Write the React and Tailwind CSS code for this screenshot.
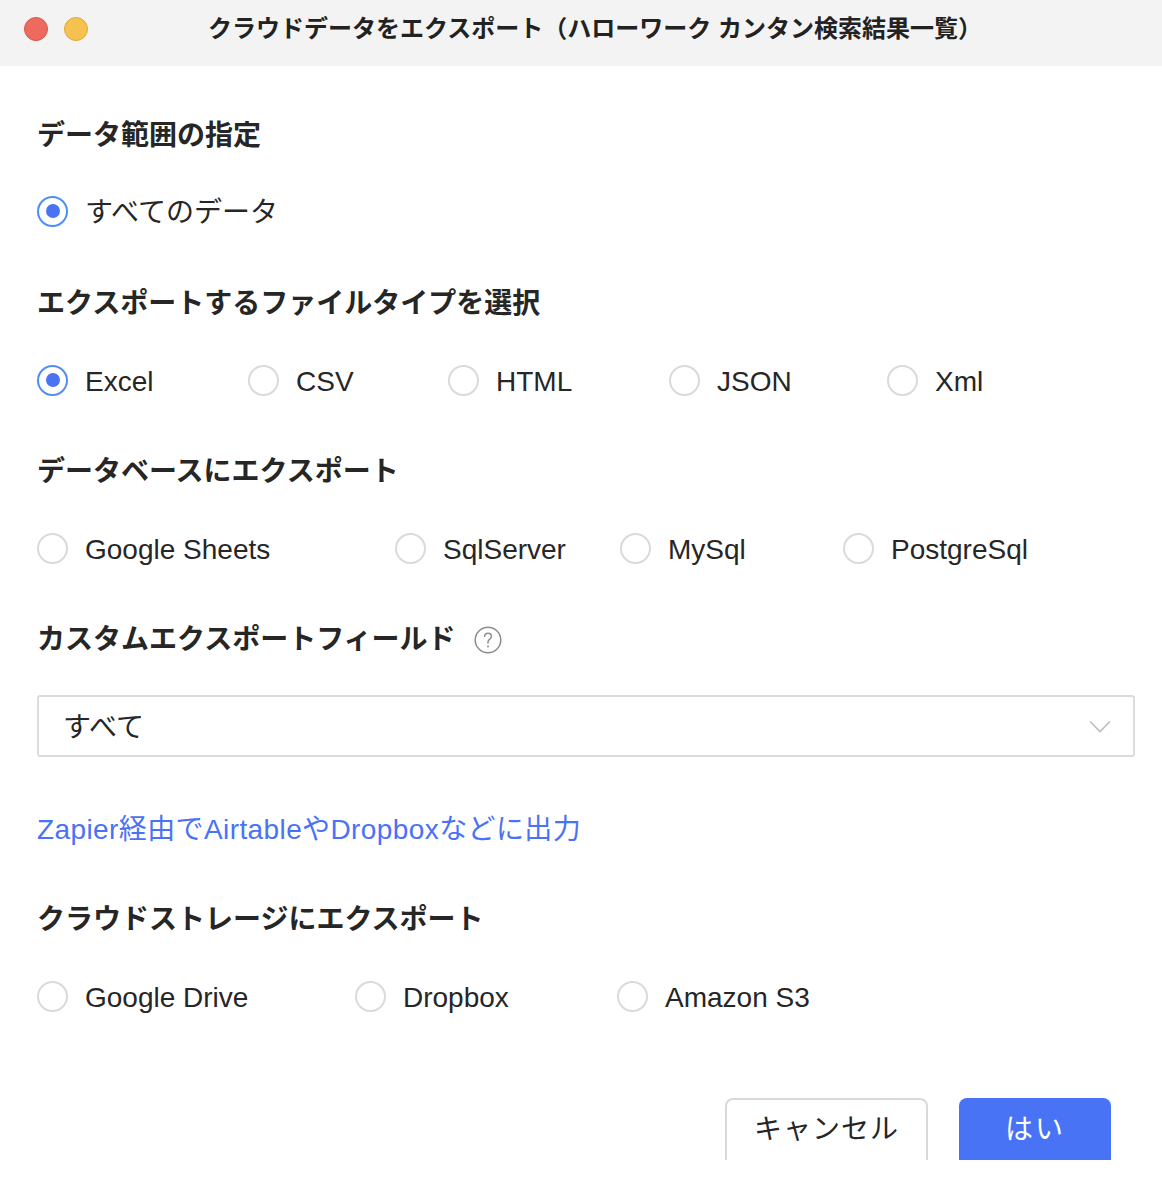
import React from "react";

const FONT = { fontFamily: '"Liberation Sans", "Noto Sans CJK JP", sans-serif' };

function Radio({ checked, label, width }) {
  return (
    <div className="flex items-center h-[40px] shrink-0" style={width ? { width } : undefined}>
      {checked ? (
        <span className="w-[31px] h-[31px] rounded-full border-2 border-[#4d8ef7] flex items-center justify-center shrink-0">
          <span className="w-[14px] h-[14px] rounded-full bg-[#4a72f5]" />
        </span>
      ) : (
        <span className="w-[31px] h-[31px] rounded-full border-2 border-[#dadada] shrink-0" />
      )}
      <span className="ml-[17px] text-[28px] leading-none text-[#262626] whitespace-nowrap pt-[3px]">{label}</span>
    </div>
  );
}

function Heading({ children }) {
  return (
    <div className="h-[40px] flex items-center text-[28px] font-bold leading-none text-[#262626] whitespace-nowrap">
      {children}
    </div>
  );
}

export default function App() {
  return (
    <div className="w-[1162px] h-[1160px] overflow-hidden bg-white" style={FONT}>
      {/* Title bar */}
      <div className="h-[66px] bg-[#f3f3f3] flex items-center pb-[9px]">
        <div className="w-[88px] flex items-center pl-[24px] gap-[16px] shrink-0">
          <span className="w-[24px] h-[24px] rounded-full bg-[#ee6a5f] border border-[#d5574d]" />
          <span className="w-[24px] h-[24px] rounded-full bg-[#f5c250] border border-[#e0a93c]" />
        </div>
        <div className="flex-1 text-center text-[24px] leading-none font-bold text-[#222] whitespace-nowrap pr-[60px]">
          クラウドデータをエクスポート（ハローワーク カンタン検索結果一覧）
        </div>
      </div>

      <div className="pl-[37px] pr-[27px] pt-[50px] flex flex-col">
        <Heading>データ範囲の指定</Heading>
        <div className="mt-[35px] flex">
          <Radio checked label="すべてのデータ" />
        </div>

        <div className="mt-[53px]">
          <Heading>エクスポートするファイルタイプを選択</Heading>
        </div>
        <div className="mt-[36px] flex">
          <Radio checked label="Excel" width={211} />
          <Radio label="CSV" width={200} />
          <Radio label="HTML" width={221} />
          <Radio label="JSON" width={218} />
          <Radio label="Xml" />
        </div>

        <div className="mt-[52px]">
          <Heading>データベースにエクスポート</Heading>
        </div>
        <div className="mt-[36px] flex">
          <Radio label="Google Sheets" width={358} />
          <Radio label="SqlServer" width={225} />
          <Radio label="MySql" width={223} />
          <Radio label="PostgreSql" />
        </div>

        <div className="mt-[52px] flex items-center">
          <Heading>カスタムエクスポートフィールド</Heading>
          <svg className="ml-[18px]" width="28" height="28" viewBox="0 0 28 28" fill="none">
            <circle cx="14" cy="14" r="12.8" stroke="#8c8c8c" strokeWidth="1.5" />
            <path
              d="M10.6 10.6c0-2 1.5-3.4 3.4-3.4s3.4 1.4 3.4 3.2c0 1.4-.8 2.1-1.9 2.9-1 .7-1.5 1.4-1.5 2.6v1.2"
              stroke="#8c8c8c"
              strokeWidth="1.5"
              strokeLinecap="round"
            />
            <circle cx="14" cy="20.6" r="1" fill="#8c8c8c" />
          </svg>
        </div>

        <div className="mt-[35px] h-[62px] border-2 border-[#dcdcdc] rounded-[3px] flex items-center justify-between pl-[24px] pr-[22px]">
          <span className="text-[28px] leading-none text-[#262626] pt-[3px]">すべて</span>
          <svg width="22" height="13" viewBox="0 0 22 13" fill="none">
            <polyline points="1,1.5 11,11.5 21,1.5" stroke="#bdbdbd" strokeWidth="1.6" />
          </svg>
        </div>

        <div className="mt-[51px] h-[40px] flex items-center text-[28px] leading-none text-[#4a72f5] whitespace-nowrap tracking-[0.4px] pt-[3px]">
          Zapier経由でAirtableやDropboxなどに出力
        </div>

        <div className="mt-[52px]">
          <Heading>クラウドストレージにエクスポート</Heading>
        </div>
        <div className="mt-[36px] flex">
          <Radio label="Google Drive" width={318} />
          <Radio label="Dropbox" width={262} />
          <Radio label="Amazon S3" />
        </div>

        <div className="mt-[82px] flex justify-end gap-[31px] pr-[24px]">
          <button className="w-[203px] h-[70px] border-2 border-[#d9d9d9] rounded-[8px] bg-white text-[28px] text-[#262626] flex items-center justify-center pb-[6px] tracking-[1px]">
            キャンセル
          </button>
          <button className="w-[152px] h-[70px] rounded-[8px] bg-[#4873f5] text-[28px] text-white flex items-center justify-center pb-[6px] tracking-[2px]">
            はい
          </button>
        </div>
      </div>
    </div>
  );
}
